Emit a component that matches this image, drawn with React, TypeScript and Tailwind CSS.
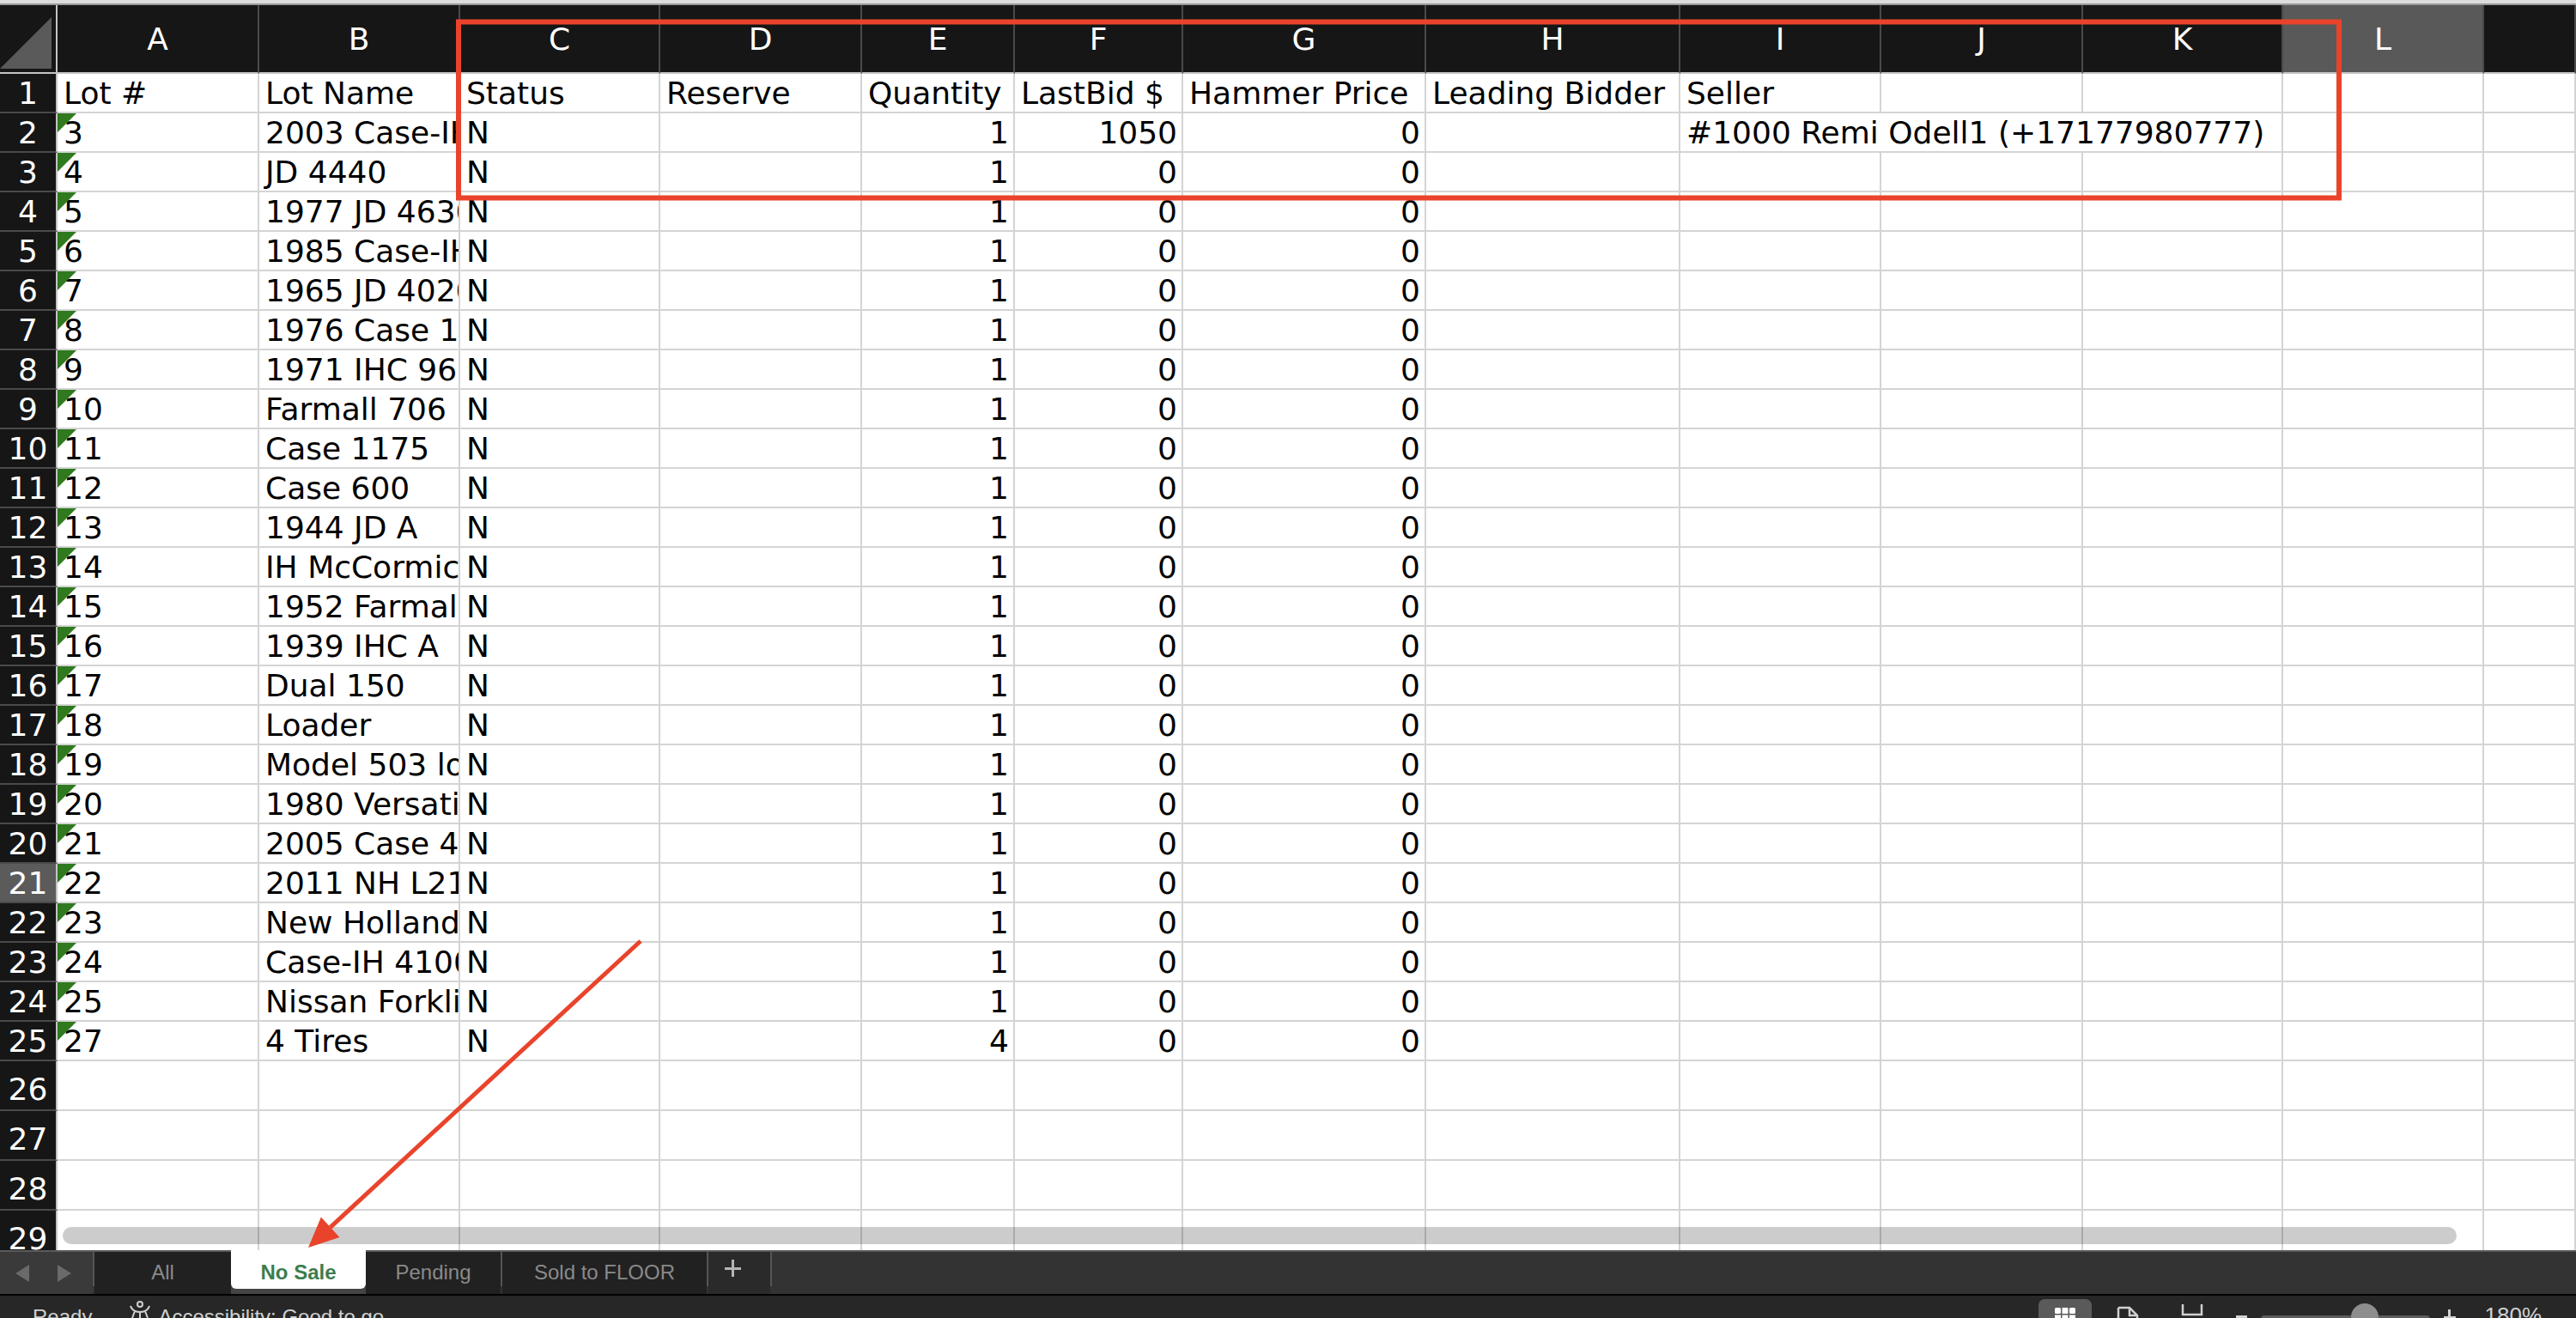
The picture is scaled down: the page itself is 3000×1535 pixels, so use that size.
import React from "react";

const GRID =
  "grid grid-cols-[67px_235px_234px_233px_235px_178px_196px_283px_296px_234px_235px_233px_234px_107px]";

const LETTERS = ["A", "B", "C", "D", "E", "F", "G", "H", "I", "J", "K", "L", ""];

const HEADERS = ["Lot #", "Lot Name", "Status", "Reserve", "Quantity", "LastBid $", "Hammer Price", "Leading Bidder", "Seller"];

const DATA: [string, string, string, string][] = [
  ["3", "2003 Case-IH MX", "1", "1050"],
  ["4", "JD 4440", "1", "0"],
  ["5", "1977 JD 4630", "1", "0"],
  ["6", "1985 Case-IH 2294", "1", "0"],
  ["7", "1965 JD 4020", "1", "0"],
  ["8", "1976 Case 1370", "1", "0"],
  ["9", "1971 IHC 966", "1", "0"],
  ["10", "Farmall 706", "1", "0"],
  ["11", "Case 1175", "1", "0"],
  ["12", "Case 600", "1", "0"],
  ["13", "1944 JD A", "1", "0"],
  ["14", "IH McCormick W9", "1", "0"],
  ["15", "1952 Farmall M", "1", "0"],
  ["16", "1939 IHC A", "1", "0"],
  ["17", "Dual 150", "1", "0"],
  ["18", "Loader", "1", "0"],
  ["19", "Model 503 loader", "1", "0"],
  ["20", "1980 Versatile 835", "1", "0"],
  ["21", "2005 Case 445", "1", "0"],
  ["22", "2011 NH L218", "1", "0"],
  ["23", "New Holland TC30", "1", "0"],
  ["24", "Case-IH 4100", "1", "0"],
  ["25", "Nissan Forklift", "1", "0"],
  ["27", "4 Tires", "4", "0"],
];

const cellBase =
  "relative flex items-end overflow-hidden whitespace-nowrap border-r-2 border-b-2 border-[#d4d4d4] leading-[42px] text-black";

function L({ children, extra = "" }: { children?: React.ReactNode; extra?: string }) {
  return <div className={`${cellBase} justify-start pl-[7px] ${extra}`}>{children}</div>;
}
function R({ children }: { children?: React.ReactNode }) {
  return <div className={`${cellBase} justify-end pr-[5px]`}>{children}</div>;
}

function RowHead({ n, tall = false }: { n: number; tall?: boolean }) {
  const sel = n === 21;
  return (
    <div
      className={`flex items-end justify-center border-r-2 border-b-2 border-r-[#c4c4c4] border-b-[#4a4a4a] text-white leading-[42px] ${
        sel ? "bg-[#5b5b5b]" : "bg-[#161616]"
      } ${tall ? "pb-[2px]" : ""}`}
    >
      {n}
    </div>
  );
}

function Tri() {
  return (
    <svg className="absolute left-0 top-0" width="22" height="22" viewBox="0 0 22 22">
      <polygon points="0,0 22,0 0,22" fill="#2f7a1f" />
    </svg>
  );
}

function DataRow({ i, d }: { i: number; d: [string, string, string, string] }) {
  const n = i + 2;
  return (
    <div className={`${GRID} h-[46px]`}>
      <RowHead n={n} />
      <L>
        <Tri />
        {d[0]}
      </L>
      <L>{d[1]}</L>
      <L>N</L>
      <L />
      <R>{d[2]}</R>
      <R>{d[3]}</R>
      <R>0</R>
      <L />
      {n === 2 ? (
        <div className={`${cellBase} col-span-3 justify-start pl-[7px]`}>#1000 Remi Odell1 (+17177980777)</div>
      ) : (
        <>
          <L />
          <L />
          <L />
        </>
      )}
      <L />
      <L />
    </div>
  );
}

function EmptyRow({ n }: { n: number }) {
  return (
    <div className={`${GRID} h-[58px] shrink-0`}>
      <RowHead n={n} tall />
      {Array.from({ length: 13 }).map((_, k) => (
        <L key={k} />
      ))}
    </div>
  );
}

function StatusIcons() {
  return (
    <div className="ml-auto flex items-start pr-[40px] text-[#cfcfcf]">
      <div className="mt-[4px] flex h-[40px] w-[62px] items-start justify-center rounded-[7px] bg-[#5a5a5a] pt-[9px]">
        <svg width="26" height="26" viewBox="0 0 26 26">
          <rect x="1" y="1" width="7" height="7" rx="1.5" fill="#ffffff" />
          <rect x="9.5" y="1" width="7" height="7" fill="#ffffff" />
          <rect x="18" y="1" width="7" height="7" rx="1.5" fill="#ffffff" />
          <rect x="1" y="9.5" width="7" height="7" fill="#ffffff" />
          <rect x="9.5" y="9.5" width="7" height="7" fill="#ffffff" />
          <rect x="18" y="9.5" width="7" height="7" fill="#ffffff" />
        </svg>
      </div>
      <div className="ml-[29px] mt-[12px]">
        <svg width="26" height="30" viewBox="0 0 26 30">
          <path d="M2 2 H15 L24 11 V30 M2 2 V30" fill="none" stroke="#d0d0d0" strokeWidth="2.5" />
          <path d="M15 2 V11 H24" fill="none" stroke="#d0d0d0" strokeWidth="2.5" />
          <rect x="7" y="20" width="12" height="10" fill="#d0d0d0" />
        </svg>
      </div>
      <div className="ml-[47px] mt-[10px]">
        <svg width="30" height="30" viewBox="0 0 30 30">
          <path d="M4 0 V12 H26 V0" fill="none" stroke="#d0d0d0" strokeWidth="2.5" />
          <path d="M2 19 H28" fill="none" stroke="#d0d0d0" strokeWidth="2.5" strokeDasharray="3 3" />
        </svg>
      </div>
      <div className="ml-[36px] mt-[23px] h-[3px] w-[13px] bg-[#d0d0d0]" />
      <div className="relative ml-[16px] mt-[23px] h-[8px] w-[197px] rounded-full bg-[#5c5c5c]">
        <div className="absolute left-[105px] top-[-14px] h-[32px] w-[32px] rounded-full bg-[#8d8d8d]" />
      </div>
      <div className="relative ml-[16px] mt-[16px] h-[20px] w-[14px]">
        <div className="absolute left-[5px] top-0 h-[20px] w-[3px] bg-[#d0d0d0]" />
        <div className="absolute left-0 top-[8px] h-[3px] w-[14px] bg-[#d0d0d0]" />
      </div>
      <div className="ml-[34px] mt-[8px] text-[26px] leading-[30px]">180%</div>
    </div>
  );
}

export default function App() {
  return (
    <div className="relative flex h-[1535px] w-[3000px] flex-col overflow-hidden bg-white font-['DejaVu_Sans',sans-serif] text-[36px]">
      {/* window top edge */}
      <div className="h-[6px] shrink-0 border-b-2 border-[#9a9a9a] bg-[#dcdcdc]" />

      {/* sheet area */}
      <div className="relative h-[1450px] shrink-0 overflow-hidden">
        {/* column header */}
        <div className={`${GRID} h-[80px]`}>
          <div className="relative border-r-2 border-b-2 border-r-[#c4c4c4] border-b-[#c4c4c4] bg-[#161616]">
            <svg className="absolute left-0 top-[14px]" width="62" height="62" viewBox="0 0 62 62">
              <polygon points="0,60 60,60 60,0" fill="#5a5a5a" />
            </svg>
          </div>
          {LETTERS.map((l, k) => (
            <div
              key={k}
              className={`flex items-center justify-center border-r-2 border-b-2 border-r-[#4a4a4a] border-b-[#c4c4c4] pt-[2px] text-white ${
                l === "L" ? "bg-[#595959]" : "bg-[#161616]"
              }`}
            >
              {l}
            </div>
          ))}
        </div>

        {/* row 1 headers */}
        <div className={`${GRID} h-[46px]`}>
          <RowHead n={1} />
          {HEADERS.map((h, k) => (
            <L key={k}>{h}</L>
          ))}
          <L />
          <L />
          <L />
          <L />
        </div>

        {DATA.map((d, i) => (
          <DataRow key={i} i={i} d={d} />
        ))}

        {[26, 27, 28, 29].map((n) => (
          <EmptyRow key={n} n={n} />
        ))}

        {/* horizontal scrollbar */}
        <div className="absolute left-[73px] top-[1423px] h-[20px] w-[2788px] rounded-full bg-black/20" />
      </div>

      {/* sheet tabs */}
      <div className="flex h-[51px] shrink-0 border-t-2 border-[#5a5a5a] bg-[#333333] font-['Liberation_Sans',Arial,sans-serif] text-[24px]">
        <div className="flex w-[108px] items-start gap-[33px] bg-[#3a3a3a] pl-[18px] pt-[15px]">
          <svg width="16" height="20" viewBox="0 0 16 20">
            <polygon points="16,0 16,20 0,10" fill="#6a6a6a" />
          </svg>
          <svg width="16" height="20" viewBox="0 0 16 20">
            <polygon points="0,0 0,20 16,10" fill="#6a6a6a" />
          </svg>
        </div>
        <div className="h-[40px] w-[2px] bg-[#555555]" />
        <div className="flex w-[159px] items-start justify-center bg-[#212121] pt-[6px] text-[#8a8a8a]">All</div>
        <div className="-mt-[2px] w-[157px] bg-[#444444]">
          <div className="flex h-[45px] items-start justify-center rounded-b-[6px] bg-white pt-[8px] font-bold text-[#3c7d4e]">
            No Sale
          </div>
        </div>
        <div className="flex w-[157px] items-start justify-center bg-[#212121] pt-[6px] text-[#8a8a8a]">Pending</div>
        <div className="h-[40px] w-[2px] bg-[#555555]" />
        <div className="flex w-[238px] items-start justify-center bg-[#212121] pt-[6px] text-[#8a8a8a]">Sold to FLOOR</div>
        <div className="h-[40px] w-[2px] bg-[#555555]" />
        <div className="relative w-[72px] bg-[#2a2a2a]">
          <div className="absolute left-[27px] top-[9px] h-[20px] w-[3px] bg-[#b5b5b5]" />
          <div className="absolute left-[19px] top-[17.5px] h-[3px] w-[19px] bg-[#b5b5b5]" />
        </div>
        <div className="h-[40px] w-[2px] bg-[#555555]" />
      </div>
      <div className="h-[2px] shrink-0 bg-black" />

      {/* status bar */}
      <div className="flex flex-1 items-start overflow-hidden bg-[#272727] font-['Liberation_Sans',Arial,sans-serif] text-[24px] text-[#d0d0d0]">
        <div className="ml-[38px] mt-[10px] leading-[30px]">Ready</div>
        <div className="ml-[42px] mt-[6px]">
          <svg width="28" height="30" viewBox="0 0 28 30">
            <circle cx="14" cy="4" r="3" fill="none" stroke="#d0d0d0" strokeWidth="2" />
            <path d="M3 6 C5 12 9 13 14 13 C19 13 23 12 25 6 M14 13 V26 M8 12 L5 20 M20 12 L23 20" fill="none" stroke="#d0d0d0" strokeWidth="2" />
          </svg>
        </div>
        <div className="ml-[7px] mt-[10px] leading-[30px]">Accessibility: Good to go</div>
        <StatusIcons />
      </div>

      {/* annotations */}
      <svg className="pointer-events-none absolute left-0 top-0" width="3000" height="1535" viewBox="0 0 3000 1535">
        <rect x="534" y="25.5" width="2190" height="205" fill="none" stroke="#e9442b" strokeWidth="6" />
        <line x1="746" y1="1096" x2="384.7" y2="1429.3" stroke="#e9442b" strokeWidth="5" />
        <polygon points="359,1453 395.5,1441.1 373.9,1417.5" fill="#e9442b" />
      </svg>
    </div>
  );
}
